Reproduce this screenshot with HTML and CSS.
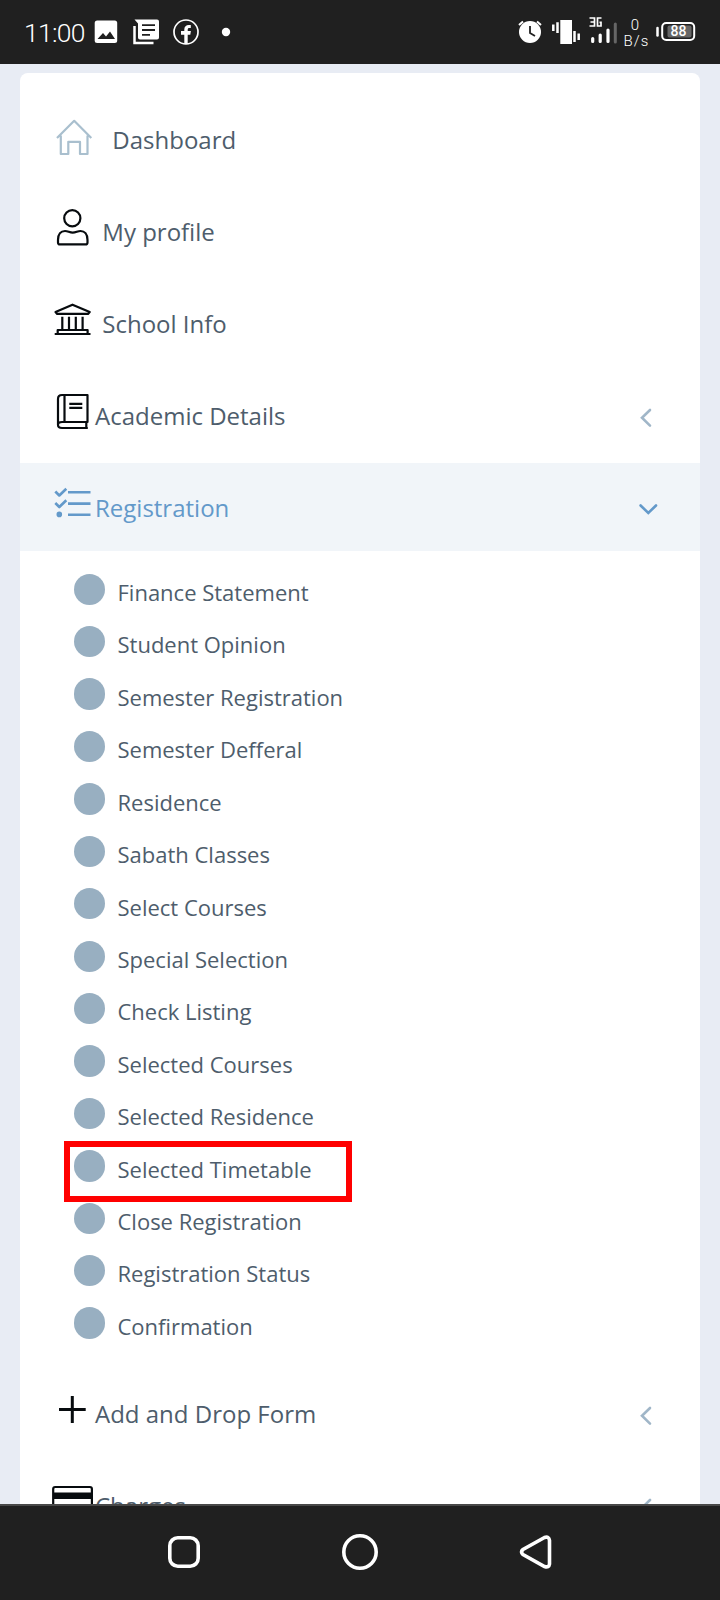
FILE: index.html
```html
<!DOCTYPE html>
<html lang="en">
<head>
<meta charset="utf-8">
<meta name="viewport" content="width=device-width">
<title>Student menu</title>
<link rel="stylesheet" href="styles.css">
</head>
<body>
<div class="screen">
  <header class="status">
    <span class="time">11:00</span>
    <svg class="status-left" viewBox="92 0 148 64">
      <rect x="94.700" y="20.500" width="22.500" height="22.500" rx="2.500" fill="#fff"/>
      <path d="M97.500 39l5.500-6 3 3.500 4-5 5 7.500z" fill="#202020"/>
      <path d="M134.500 26V43H153.500" fill="none" stroke="#fff" stroke-width="2.500"/>
      <path d="M134.500 19.500H157a2 2 0 0 1 2 2V37.500a2 2 0 0 1-2 2H140a2 2 0 0 1-2-2V23.500z" fill="#fff"/>
      <path d="M142 25.200H155M142 30H155M142 34.800H150" stroke="#202020" stroke-width="1.800"/>
      <circle cx="186" cy="32" r="12" fill="none" stroke="#fff" stroke-width="1.700"/>
      <path d="M184.300 44V34.800H181V31H184.300V29.500c0-3 1.800-4.600 4.500-4.600h2v3.200h-1.600c-1 0-1.500.6-1.500 1.600V31h3.200l-.6 3.800h-2.600V44z" fill="#fff"/>
      <circle cx="226" cy="32" r="4.200" fill="#fff"/>
    </svg>
    <svg class="status-right" viewBox="515 0 183 64">
      <circle cx="530" cy="32" r="11" fill="#fff"/>
      <path d="M519 25l4-3.500M541 25l-4-3.500" stroke="#fff" stroke-width="2"/>
      <path d="M530 26V33l5 3" fill="none" stroke="#202020" stroke-width="1.800"/>
      <path d="M553.300 24.500V31M557.500 22.300V33M574.500 31V42M578.700 33.500V40" stroke="#fff" stroke-width="2.500"/>
      <rect x="560.300" y="20" width="11.700" height="24" fill="#fff"/>
      <path d="M589.500 18H594.500V26H589.500M590.500 22H594.500M601.500 18H597.500V26H601V22.300H599.500" fill="none" stroke="#fff" stroke-width="1.700"/>
      <path d="M592.700 38.500V41.500M600.200 35V41.500M608 30V41.500" stroke="#fff" stroke-width="3.200" stroke-linecap="round"/>
      <path d="M615.300 24V42" stroke="#666" stroke-width="3" stroke-linecap="round"/>
      <text x="635" y="29.500" class="speed">0</text>
      <text x="636.500" y="46" class="speed unit">B/s</text>
      <path d="M657.500 28V35.500" stroke="#fff" stroke-width="2.500" stroke-linecap="round"/>
      <rect x="662.200" y="23" width="32" height="17" rx="4" fill="none" stroke="#fff" stroke-width="2"/>
      <rect x="667.500" y="25.500" width="24" height="12" rx="2" fill="#666"/>
      <text x="678.500" y="36" class="battery">88</text>
    </svg>
  </header>

  <main class="page">
    <nav class="card">
      <a class="row">
        <svg class="icon house" viewBox="50 95 44 88"><path d="M57 138L74.200 120.800L91.300 138M60.800 135.500V154H68.300V141.800H80V154H87.500V135.500"/></svg>
        <span class="label far">Dashboard</span>
      </a>
      <a class="row">
        <svg class="icon" viewBox="50 187 44 88"><circle cx="72.300" cy="218.300" r="8.100"/><path d="M60 244.400H85.500Q87.500 244.400 87.500 242.400V240C87.500 234 84.500 231 80.500 231C77.500 231 76 232.700 72.700 232.700C69.500 232.700 68 231 65 231C61 231 58 234 58 240V242.400Q58 244.400 60 244.400Z"/></svg>
        <span class="label mid">My profile</span>
      </a>
      <a class="row">
        <svg class="icon" viewBox="50 279 44 88"><path d="M55.500 312L72.500 304.700L89.700 312L88 313.900H57.200ZM62.300 316.700V329M69 316.700V329M75.800 316.700V329M82.600 316.700V329M57.700 333V330H87.600V333M54.700 334H90.500"/></svg>
        <span class="label mid">School Info</span>
      </a>
      <a class="row">
        <svg class="icon" viewBox="50 371 44 88"><path d="M58 425V399Q58 395 62 395H87.500V422H62Q58 422 58 425Q58 428 62 428H87.800M86.300 422V428M64.500 395V421.500M69.300 403.800H82.300M69.300 407.800H82.300"/></svg>
        <span class="label">Academic Details</span>
        <svg class="chevron" viewBox="636 371 24 88"><path d="M650 410L642 417.800L650 425.600"/></svg>
      </a>
      <a class="row active">
        <svg class="icon tasks" viewBox="50 463 44 88"><path d="M55.300 491.500L59.300 495.500L66.300 488.800M55.300 503L59.300 507L66.300 500.200M68 492.200H90.500M68 503.600H90.500M68 514.700H90.500"/><circle cx="59.300" cy="514.400" r="1.500"/></svg>
        <span class="label">Registration</span>
        <svg class="chevron" viewBox="636 463 24 88"><path d="M640.600 505.500L648.300 513L656 505.500"/></svg>
      </a>
      <ul class="sub">
        <li><i></i><span>Finance Statement</span></li>
        <li><i></i><span>Student Opinion</span></li>
        <li><i></i><span>Semester Registration</span></li>
        <li><i></i><span>Semester Defferal</span></li>
        <li><i></i><span>Residence</span></li>
        <li><i></i><span>Sabath Classes</span></li>
        <li><i></i><span>Select Courses</span></li>
        <li><i></i><span>Special Selection</span></li>
        <li><i></i><span>Check Listing</span></li>
        <li><i></i><span>Selected Courses</span></li>
        <li><i></i><span>Selected Residence</span></li>
        <li class="marked"><i></i><span>Selected Timetable</span></li>
        <li><i></i><span>Close Registration</span></li>
        <li><i></i><span>Registration Status</span></li>
        <li><i></i><span>Confirmation</span></li>
      </ul>
      <a class="row">
        <svg class="icon plus" viewBox="50 1369 44 88"><path d="M59 1409.500H85.700M72.300 1396V1423"/></svg>
        <span class="label">Add and Drop Form</span>
        <svg class="chevron" viewBox="636 1369 24 88"><path d="M650 1408L642 1415.800L650 1423.600"/></svg>
      </a>
      <a class="row">
        <svg class="icon" viewBox="50 1461 44 88"><rect x="53.200" y="1487" width="38.700" height="30" rx="2"/><path d="M53 1495.700H92" stroke-width="6.500"/></svg>
        <span class="label">Charges</span>
        <svg class="chevron" viewBox="636 1461 24 88"><path d="M650 1500L642 1507.800L650 1515.600"/></svg>
      </a>
    </nav>
  </main>

  <footer class="keys">
    <svg viewBox="0 0 36 36"><rect x="3.800" y="3.800" width="28.400" height="28.400" rx="8"/></svg>
    <svg viewBox="0 0 36 36"><circle cx="18" cy="18" r="16.200"/></svg>
    <svg viewBox="0 0 36 36"><path d="M26.500 3.500L5 15.500Q2 18 5 20.500L26.500 32.500Q31 34 31.500 30V6.500Q31 2 26.500 3.500Z"/></svg>
  </footer>
</div>
</body>
</html>
```
FILE: styles.css
```css
* { box-sizing: border-box; }
body { margin: 0; background: #e8ecf4; font-family: "Open Sans", "Noto Sans", sans-serif; color: #4e5d6c; }
.screen { display: flex; flex-direction: column; width: 720px; height: 1600px; overflow: hidden; }
.status { display: flex; flex: none; height: 64px; padding: 0 22px 0 24px; background: #202020; color: #fff; }
.time { width: 68px; font: 300 26.500px/65px Roboto, sans-serif; letter-spacing: -0.700px; white-space: nowrap; }
.status-left { width: 148px; height: 64px; }
.status-right { width: 183px; height: 64px; margin-left: auto; }
.speed { font: 300 15px Roboto, sans-serif; fill: #fff; text-anchor: middle; }
.unit { letter-spacing: 1px; }
.battery { font: 500 14px Roboto, sans-serif; fill: #fff; text-anchor: middle; }
.page { flex: 1; min-height: 0; overflow: hidden; padding: 9px 20px 0; }
.card { display: flex; flex-direction: column; gap: 4px; padding-top: 22px; background: #fff; border-radius: 8px 8px 0 0; }
.row { display: flex; height: 88px; padding: 0 40px 0 30px; }
.active { background: #f1f5f9; color: #6399ca; }
.icon { flex: none; width: 44px; height: 88px; fill: none; stroke: #070b0e; stroke-width: 2.200; stroke-linejoin: round; }
.house { stroke: #a9bfce; }
.tasks { stroke: #6399ca; stroke-width: 2.600; }
.plus { stroke-width: 3; }
.label { margin-left: 1px; font-size: 24px; line-height: 90px; white-space: nowrap; }
.mid { margin-left: 8.300px; }
.far { margin-left: 18.300px; }
.chevron { flex: none; width: 24px; height: 88px; margin-left: auto; fill: none; stroke: #a0b6c8; stroke-width: 2.600; stroke-linecap: round; }
.active .chevron { stroke: #6399ca; }
.sub { list-style: none; margin: -4px 0 0; padding: 12px 0 15.500px 54px; }
.sub li { position: relative; display: flex; align-items: center; gap: 12.200px; height: 52.430px; }
.sub i { flex: none; width: 31.300px; height: 31.300px; border-radius: 50%; background: #98afc1; }
.sub span { padding-top: 5.600px; font-size: 22px; line-height: 30px; white-space: nowrap; }
.marked::after { content: ""; position: absolute; box-sizing: border-box; left: -10px; top: 1px; width: 288px; height: 61px; border: 6px solid #f00; }
.keys { display: flex; flex: none; align-items: center; justify-content: center; gap: 140px; height: 96px; padding-bottom: 2px; border-top: 2px solid #484848; background: #202020; }
.keys svg { width: 36px; height: 36px; fill: none; stroke: #fff; stroke-width: 3.600; }
```
